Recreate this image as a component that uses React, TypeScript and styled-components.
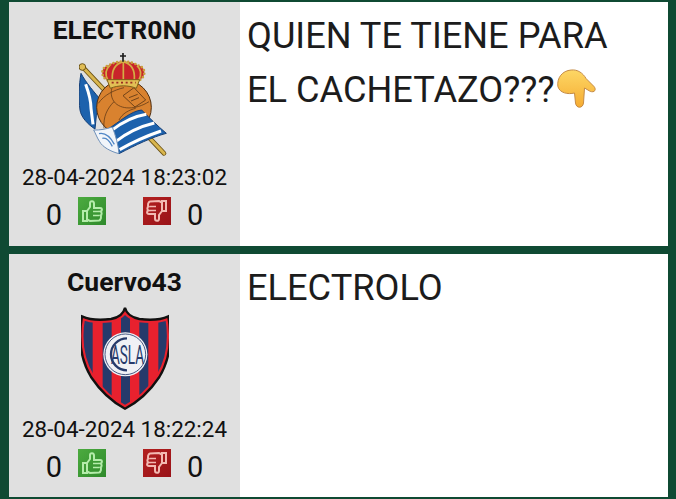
import styled, { createGlobalStyle } from "styled-components";

const GlobalStyle = createGlobalStyle`
  html, body {
    margin: 0;
    padding: 0;
    background-color: #0f4a33;
  }
`;

const Board = styled.div`
  width: 676px;
  height: 499px;
  box-sizing: border-box;
  padding: 2px 8px 2px 9px;
  display: grid;
  grid-template-rows: 244px 243px;
  gap: 8px;
  background-color: #0f4a33;
  overflow: hidden;
`;

const Post = styled.div`
  display: flex;
  background-color: #ffffff;
`;

const UserColumn = styled.div`
  width: 231px;
  flex-shrink: 0;
  background-color: #e0e0e0;
  display: flex;
  flex-direction: column;
  align-items: center;
  font-family: Roboto, "Liberation Sans", sans-serif;
  color: #111;
`;

const UserName = styled.div`
  margin-top: 13px;
  height: 30px;
  line-height: 30px;
  font-size: 26.5px;
  font-weight: 700;
`;

const Crest = styled.div`
  height: 108px;
  margin-top: 8px;
  display: flex;
  justify-content: center;
`;

const PostDate = styled.div`
  margin-top: 3px;
  font-size: 22.4px;
  line-height: 26px;
`;

const Votes = styled.div`
  margin-top: 1px;
  display: flex;
  gap: 37px;
  font-size: 29px;
  line-height: 32px;
`;

const VoteGroup = styled.div`
  display: flex;
  align-items: center;
  gap: 16px;
`;

const VoteCount = styled.span`
  margin-top: 8px;
`;

const VoteBadge = styled.div<{ $from: string; $to: string }>`
  width: 28px;
  height: 28px;
  background: linear-gradient(135deg, ${(p) => p.$from}, ${(p) => p.$to});
  display: flex;
  align-items: center;
  justify-content: center;
`;

const ThumbIcon = styled.svg<{ $flip?: boolean }>`
  width: 28px;
  height: 28px;
  transform: ${(p) => (p.$flip ? "rotate(180deg)" : "none")};
`;

const Message = styled.div`
  flex: 1;
  padding: 7px 8px 0 7px;
  font-family: Roboto, "Liberation Sans", sans-serif;
  font-size: 36.2px;
  line-height: 54px;
  color: #1c1c1c;
  white-space: nowrap;
`;

const PointingHand = styled.svg`
  width: 41px;
  height: 40px;
  margin-left: 1px;
  vertical-align: -7px;
`;

function Thumb({ color, flip }: { color: string; flip?: boolean }) {
  return (
    <ThumbIcon $flip={flip} viewBox="0 0 28 28" fill="none" stroke={color} strokeWidth="2">
      <path d="M5 14 H9 V24 H5 Z" />
      <path d="M9 14 L12 10 V6 C12 3.5 16 3.5 16 6.5 V11 H22 C24.5 11 24.5 14 22.5 14.5 C24 15 24 18 22.5 18.5 C23.5 19.5 23 23 21 23.5 L12 24 L9 22.5" />
      <path d="M15 14.5 H21 M15 18.5 H21" strokeWidth="1.6" />
    </ThumbIcon>
  );
}

function RealSociedadCrest() {
  return (
    <svg width="92" height="108" viewBox="30 24 276 324">
      {/* asta */}
      <path d="M40 65 L285 325" stroke="#6e5518" strokeWidth="14" strokeLinecap="round" />
      <path d="M40 65 L285 325" stroke="#d9b64e" strokeWidth="9" strokeLinecap="round" />
      <circle cx="40" cy="66" r="10" fill="#e0bd55" stroke="#6e5518" strokeWidth="3" />
      {/* banderin */}
      <path
        d="M36 85 C50 112 76 142 98 168 L82 212 L78 252 C56 238 36 216 33 195 C28 160 30 120 36 85 Z"
        fill="#1d62ad"
        stroke="#143f78"
        strokeWidth="3"
      />
      <path d="M50 118 C58 140 66 165 66 190 L72 238" stroke="#fff" strokeWidth="9" fill="none" />
      {/* pelota */}
      <circle cx="165" cy="187" r="82" fill="#d9822f" stroke="#4e2d10" strokeWidth="3" />
      <path
        d="M88 175 C105 150 135 135 165 128 M105 250 C102 215 115 190 135 170 C155 195 200 195 240 170 M135 170 C125 155 125 140 130 125 M150 225 C160 205 180 195 200 190"
        stroke="#5b3614"
        strokeWidth="2.2"
        fill="none"
      />
      <path d="M162 152 L195 128 L230 165 L198 186 Z" fill="#d9822f" stroke="#5b3614" strokeWidth="2.5" />
      <path d="M180 158 L206 148 M186 168 L210 158" stroke="#5b3614" strokeWidth="2.5" />
      {/* corona */}
      <path
        d="M116 106 C94 96 94 66 120 61 C140 46 186 46 206 61 C232 66 232 96 210 106 Z"
        fill="#c9242a"
      />
      <path
        d="M116 106 C94 96 94 66 120 61 C140 46 186 46 206 61 C232 66 232 96 210 106"
        fill="none"
        stroke="#c9a23c"
        strokeWidth="8"
        strokeLinecap="round"
        strokeDasharray="0 11"
      />
      <path
        d="M163 50 V104 M163 50 C140 56 128 75 130 104 M163 50 C186 56 198 75 196 104 M122 62 C108 75 110 92 116 104 M204 62 C218 75 216 92 210 104"
        stroke="#d4ad44"
        strokeWidth="5"
        fill="none"
      />
      <path d="M162 24 V50 M153 33 H171" stroke="#1d1d1d" strokeWidth="5" />
      <path
        d="M114 104 H212 L202 130 C178 120 148 120 124 130 Z"
        fill="#e2bf55"
        stroke="#7d6119"
        strokeWidth="3"
      />
      <path d="M128 113 H200" stroke="#9c2b22" strokeWidth="5" strokeDasharray="6 8" />
      {/* bandera a rayas */}
      <path
        d="M120 250 C150 232 185 198 218 195 C238 216 265 242 292 265 C250 276 200 300 150 326 Z"
        fill="#1d62ad"
        stroke="#143f78"
        strokeWidth="3"
      />
      <path
        d="M128 256 C160 232 195 214 232 208 M140 290 C175 262 215 244 256 234 M152 314 C190 292 235 272 276 258"
        stroke="#fff"
        strokeWidth="9"
        fill="none"
      />
      <path
        d="M74 255 C92 256 112 252 130 246 C140 272 148 300 150 326 C126 320 100 306 92 290 C85 280 80 266 74 255 Z"
        fill="#f1f5fa"
        stroke="#6d8fb8"
        strokeWidth="3"
      />
      <path d="M90 266 C108 262 122 272 136 298 M100 280 C112 276 122 288 130 304" stroke="#4f86c6" strokeWidth="4" fill="none" />
    </svg>
  );
}

function SanLorenzoCrest() {
  const shield =
    "M192 32 C196 50 215 62 235 66 C265 70 300 68 322 58 C335 130 325 190 295 240 C265 285 225 318 192 335 C160 318 120 285 90 240 C60 190 50 130 63 58 C85 68 120 70 150 66 C170 62 188 50 192 32 Z";
  return (
    <svg width="88" height="108" viewBox="60 24 264 324">
      <defs>
        <clipPath id="escudo">
          <path d={shield} />
        </clipPath>
      </defs>
      <path d={shield} fill="#263a6b" />
      <g clipPath="url(#escudo)">
        <path d="M95 0 H125 V350 H95 Z M152 0 H180 V350 H152 Z M207 0 H235 V350 H207 Z M262 0 H292 V350 H262 Z" fill="#e8212e" />
        <path d={shield} fill="none" stroke="#e8212e" strokeWidth="20" />
      </g>
      <path d={shield} fill="none" stroke="#111" strokeWidth="7" />
      <circle cx="193" cy="172" r="66" fill="#f0f1f5" />
      <circle cx="193" cy="172" r="61" fill="none" stroke="#263a6b" strokeWidth="2.5" />
      <path d="M198 124 A48 48 0 1 0 198 220" fill="none" stroke="#263a6b" strokeWidth="7" />
      <g transform="translate(150 201) scale(0.52 1)">
        <text fontFamily="Roboto, sans-serif" fontSize="78" fill="#263a6b">
          ASLA
        </text>
      </g>
    </svg>
  );
}

function HandEmoji() {
  return (
    <PointingHand viewBox="50 33 122 120">
      <defs>
        <linearGradient id="mano" x1="0" y1="0" x2="0" y2="1">
          <stop offset="0" stopColor="#fdd765" />
          <stop offset="1" stopColor="#f6ac32" />
        </linearGradient>
      </defs>
      <path
        d="M55 85 C52 60 68 38 95 36 C115 34 130 45 140 62 L163 85 C172 95 165 105 152 100 L135 90 L132 135 C130 152 110 152 108 135 L105 105 C85 110 60 105 55 85 Z"
        fill="url(#mano)"
        stroke="#c58b45"
        strokeWidth="3"
      />
    </PointingHand>
  );
}

const posts = [
  {
    user: "ELECTR0N0",
    crest: <RealSociedadCrest />,
    date: "28-04-2024 18:23:02",
    text: (
      <>
        QUIEN TE TIENE PARA
        <br />
        EL CACHETAZO???
        <HandEmoji />
      </>
    ),
  },
  {
    user: "Cuervo43",
    crest: <SanLorenzoCrest />,
    date: "28-04-2024 18:22:24",
    text: "ELECTROLO",
  },
];

export default function App() {
  return (
    <>
      <GlobalStyle />
      <Board>
        {posts.map((post) => {
          return (
            <Post key={post.user}>
              <UserColumn>
                <UserName>{post.user}</UserName>
                <Crest>{post.crest}</Crest>
                <PostDate>{post.date}</PostDate>
                <Votes>
                  <VoteGroup>
                    <VoteCount>0</VoteCount>
                    <VoteBadge $from="#4cab3f" $to="#2f8a2c">
                      <Thumb color="#b4ecaa" />
                    </VoteBadge>
                  </VoteGroup>
                  <VoteGroup>
                    <VoteBadge $from="#b3201f" $to="#991319">
                      <Thumb color="#f3b9b2" flip />
                    </VoteBadge>
                    <VoteCount>0</VoteCount>
                  </VoteGroup>
                </Votes>
              </UserColumn>
              <Message>{post.text}</Message>
            </Post>
          );
        })}
      </Board>
    </>
  );
}
